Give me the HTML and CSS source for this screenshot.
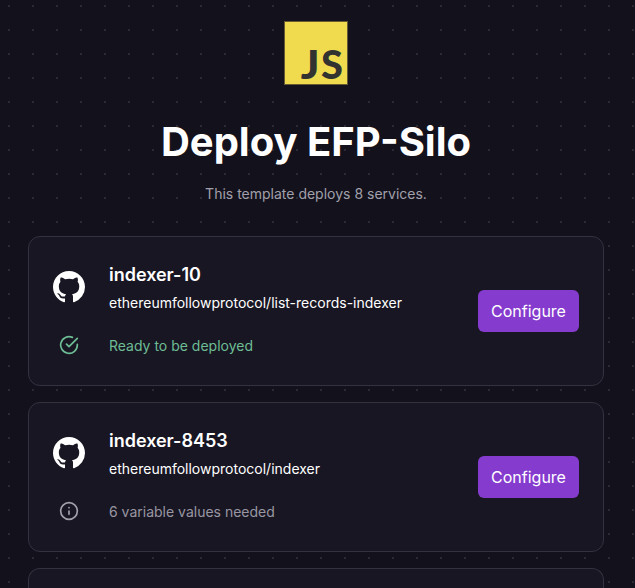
FILE: index.html
```html
<!DOCTYPE html>
<html lang="en">
<head>
<meta charset="utf-8">
<title>Deploy EFP-Silo</title>
<link rel="stylesheet" href="styles.css">
</head>
<body>
<svg class="defs" aria-hidden="true">
  <symbol id="github" viewBox="0 0 16 16"><path fill="currentColor" d="M8 0C3.58 0 0 3.58 0 8c0 3.54 2.29 6.53 5.47 7.59.4.07.55-.17.55-.38 0-.19-.01-.82-.01-1.49-2.01.37-2.53-.49-2.69-.94-.09-.23-.48-.94-.82-1.13-.28-.15-.68-.52-.01-.53.63-.01 1.08.58 1.23.82.72 1.21 1.87.87 2.33.66.07-.52.28-.87.51-1.07-1.78-.2-3.64-.89-3.64-3.95 0-.87.31-1.59.82-2.15-.08-.2-.36-1.02.08-2.12 0 0 .67-.21 2.2.82.64-.18 1.32-.27 2-.27s1.36.09 2 .27c1.53-1.04 2.2-.82 2.2-.82.44 1.1.16 1.92.08 2.12.51.56.82 1.27.82 2.15 0 3.07-1.87 3.75-3.65 3.95.29.25.54.73.54 1.48 0 1.07-.01 1.93-.01 2.2 0 .21.15.46.55.38A8.01 8.01 0 0 0 16 8c0-4.42-3.58-8-8-8z"/></symbol>
</svg>
<main class="page">
  <svg class="logo" viewBox="0 0 64 64">
    <rect class="logo-tile" x=".5" y=".5" width="63" height="63"/>
    <text class="logo-text" transform="translate(16.8 57.8) scale(1.12 1)">J</text>
    <text class="logo-text" transform="translate(37 57.8) scale(1.02 1)">S</text>
  </svg>
  <h1 class="title">Deploy EFP-Silo</h1>
  <p class="subtitle">This template deploys 8 services.</p>
  <div class="services">
    <section class="card">
      <div class="details">
        <svg class="github"><use href="#github"/></svg>
        <div>
          <h2 class="name">indexer-10</h2>
          <p class="repo">ethereumfollowprotocol/list-records-indexer</p>
        </div>
        <svg class="status-icon ready" viewBox="0 0 24 24"><path d="M22 11.1V12a10 10 0 1 1-5.93-9.14M22 4 12 14l-3-3"/></svg>
        <p class="status ready">Ready to be deployed</p>
      </div>
      <button class="configure">Configure</button>
    </section>
    <section class="card">
      <div class="details">
        <svg class="github"><use href="#github"/></svg>
        <div>
          <h2 class="name">indexer-8453</h2>
          <p class="repo">ethereumfollowprotocol/indexer</p>
        </div>
        <svg class="status-icon" viewBox="0 0 24 24"><circle cx="12" cy="12" r="10"/><path d="M12 16v-4M12 8h.01"/></svg>
        <p class="status">6 variable values needed</p>
      </div>
      <button class="configure">Configure</button>
    </section>
    <section class="card card-cut"></section>
  </div>
</main>
</body>
</html>
```
FILE: styles.css
```css
* { box-sizing: border-box; margin: 0; }
html { background: #13111c; }
body {
  height: 588px;
  overflow: hidden;
  color: #fff;
  font-family: Inter, sans-serif;
  background: conic-gradient(from 90deg at 22px 22px, #2b2934 90deg, transparent 0) 10px 7px / 24px 24px;
}
.defs { display: none; }
.page {
  display: flex;
  flex-direction: column;
  align-items: center;
  width: 576px;
  margin-left: 28px;
  padding-top: 21px;
}
.logo { width: 64px; height: 64px; overflow: visible; }
.logo-tile { fill: #f0db4f; stroke: #665b32; stroke-width: 1; }
.logo-text { fill: #323330; font: 900 39px Lato, sans-serif; }
.title { margin-top: 32px; font-size: 40px; line-height: 50px; font-weight: 700; white-space: nowrap; }
.subtitle { margin-top: 15px; color: #a1a0ab; font-size: 14px; line-height: 24px; }
.services { display: flex; flex-direction: column; gap: 16px; width: 100%; margin-top: 30px; }
.card {
  display: flex;
  align-items: center;
  justify-content: space-between;
  height: 150px;
  padding: 24px;
  flex: none;
  border: 1px solid #33323e;
  border-radius: 12px;
  background: #181622;
}
.card-cut {
  height: 20px;
  padding: 0;
  border-bottom: 0;
  border-radius: 12px 12px 0 0;
}
.details {
  display: grid;
  grid-template-columns: 32px 1fr;
  column-gap: 24px;
  row-gap: 19px;
  align-items: center;
  align-self: flex-start;
  justify-items: start;
}
.github { width: 32px; height: 32px; margin-bottom: 2px; }
.name { font-size: 18px; line-height: 28px; font-weight: 600; letter-spacing: -0.02px; }
.repo { margin-top: 2px; font-size: 14px; line-height: 24px; }
.status-icon {
  width: 20px;
  height: 20px;
  margin-bottom: 2px;
  justify-self: center;
  fill: none;
  stroke: currentColor;
  stroke-width: 2;
  stroke-linecap: round;
  stroke-linejoin: round;
  color: #a1a0ab;
}
.status { color: #9896a2; font-size: 14px; line-height: 24px; }
.status-icon.ready, .status.ready { color: #6dbd95; }
.configure {
  width: 101px;
  height: 42px;
  padding: 0;
  border: 0;
  border-radius: 6px;
  background: #853bce;
  color: #fff;
  font: 400 16px/24px Inter, sans-serif;
}
```
